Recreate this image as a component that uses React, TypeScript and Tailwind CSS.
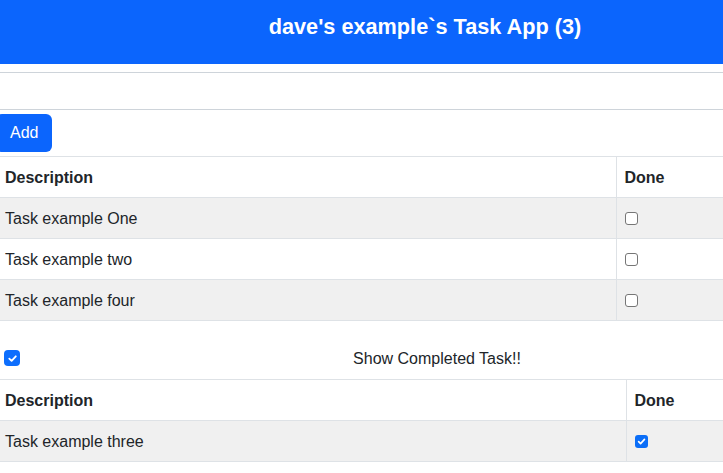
import { useState } from "react";

type Task = { id: number; description: string; done: boolean };

const initialTasks: Task[] = [
  { id: 1, description: "Task example One", done: false },
  { id: 2, description: "Task example two", done: false },
  { id: 3, description: "Task example three", done: true },
  { id: 4, description: "Task example four", done: false },
];

function SmallCheck({ checked }: { checked: boolean }) {
  // native-looking small checkbox used in the table rows
  if (checked) {
    return (
      <span className="flex h-[13px] w-[13px] items-center justify-center rounded-[3px] bg-[#0b6ef7]">
        <svg width="9" height="9" viewBox="0 0 10 10">
          <path d="M1.8 5.2 4 7.4 8.3 2.6" fill="none" stroke="#fff" strokeWidth="1.8" strokeLinecap="round" strokeLinejoin="round" />
        </svg>
      </span>
    );
  }
  return <span className="block h-[13px] w-[13px] rounded-[3px] border border-[#767676] bg-white" />;
}

function TaskTable({ tasks, descWidth }: { tasks: Task[]; descWidth: string }) {
  return (
    <table className="w-full table-fixed border-collapse text-[16px] leading-6 text-[#212529]">
      <thead>
        <tr className="border-y border-[#dee2e6]">
          <th className={`${descWidth} border-r border-[#dee2e6] px-2 pt-[9px] pb-[7px] text-left font-bold`}>Description</th>
          <th className="px-2 pt-[9px] pb-[7px] text-left font-bold">Done</th>
        </tr>
      </thead>
      <tbody>
        {tasks.map((task, i) => (
          <tr key={task.id} className={`border-b border-[#dee2e6] ${i % 2 === 0 ? "bg-[#f0f0f0]" : "bg-white"}`}>
            <td className="border-r border-[#dee2e6] px-2 pt-[9px] pb-[7px]">{task.description}</td>
            <td className="px-2 py-2">
              <div className="flex h-6 items-center">
                <SmallCheck checked={task.done} />
              </div>
            </td>
          </tr>
        ))}
      </tbody>
    </table>
  );
}

export default function App() {
  const [tasks] = useState(initialTasks);
  const [showCompleted] = useState(true);
  const open = tasks.filter((t) => !t.done);
  const done = tasks.filter((t) => t.done);

  return (
    <div className="min-h-screen w-full overflow-hidden bg-white font-['Liberation_Sans',Arial,sans-serif] text-[#212529]">
      {/* HEADER */}
      <header className="flex h-16 justify-center bg-[#0b65fd] pl-[127px] pt-[14px]">
        <h1 className="text-[21.7px] font-bold leading-[26px] text-white">
          dave's example`s Task App ({open.length})
        </h1>
      </header>

      {/* NEW TASK */}
      <div className="mt-2 -ml-[3px] w-[calc(100%+3px)]">
        <input className="block h-[38px] w-full border-y border-[#ced4da] px-3 text-[16px] outline-none" />
        <button className="mt-1 -ml-px h-[38px] rounded-md bg-[#0b65fd] px-[14px] text-[16px] text-white">
          Add
        </button>

        <div className="mt-1">
          <TaskTable tasks={open} descWidth="w-[619px]" />
        </div>

        {/* SHOW COMPLETED */}
        <div className="flex items-start pl-[7px] pt-[26px] pb-[8px]">
          <span className="mt-[3px] flex h-4 w-4 items-center justify-center rounded bg-[#0d6efd]">
            {showCompleted && (
              <svg width="11" height="11" viewBox="0 0 12 12">
                <path d="M2.5 6.2 5 8.6 9.6 3.6" fill="none" stroke="#fff" strokeWidth="2" strokeLinecap="round" strokeLinejoin="round" />
              </svg>
            )}
          </span>
          <label className="flex-1 pl-[131px] text-center text-[16px] leading-6">Show Completed Task!!</label>
        </div>

        <TaskTable tasks={done} descWidth="w-[629px]" />
      </div>
    </div>
  );
}
